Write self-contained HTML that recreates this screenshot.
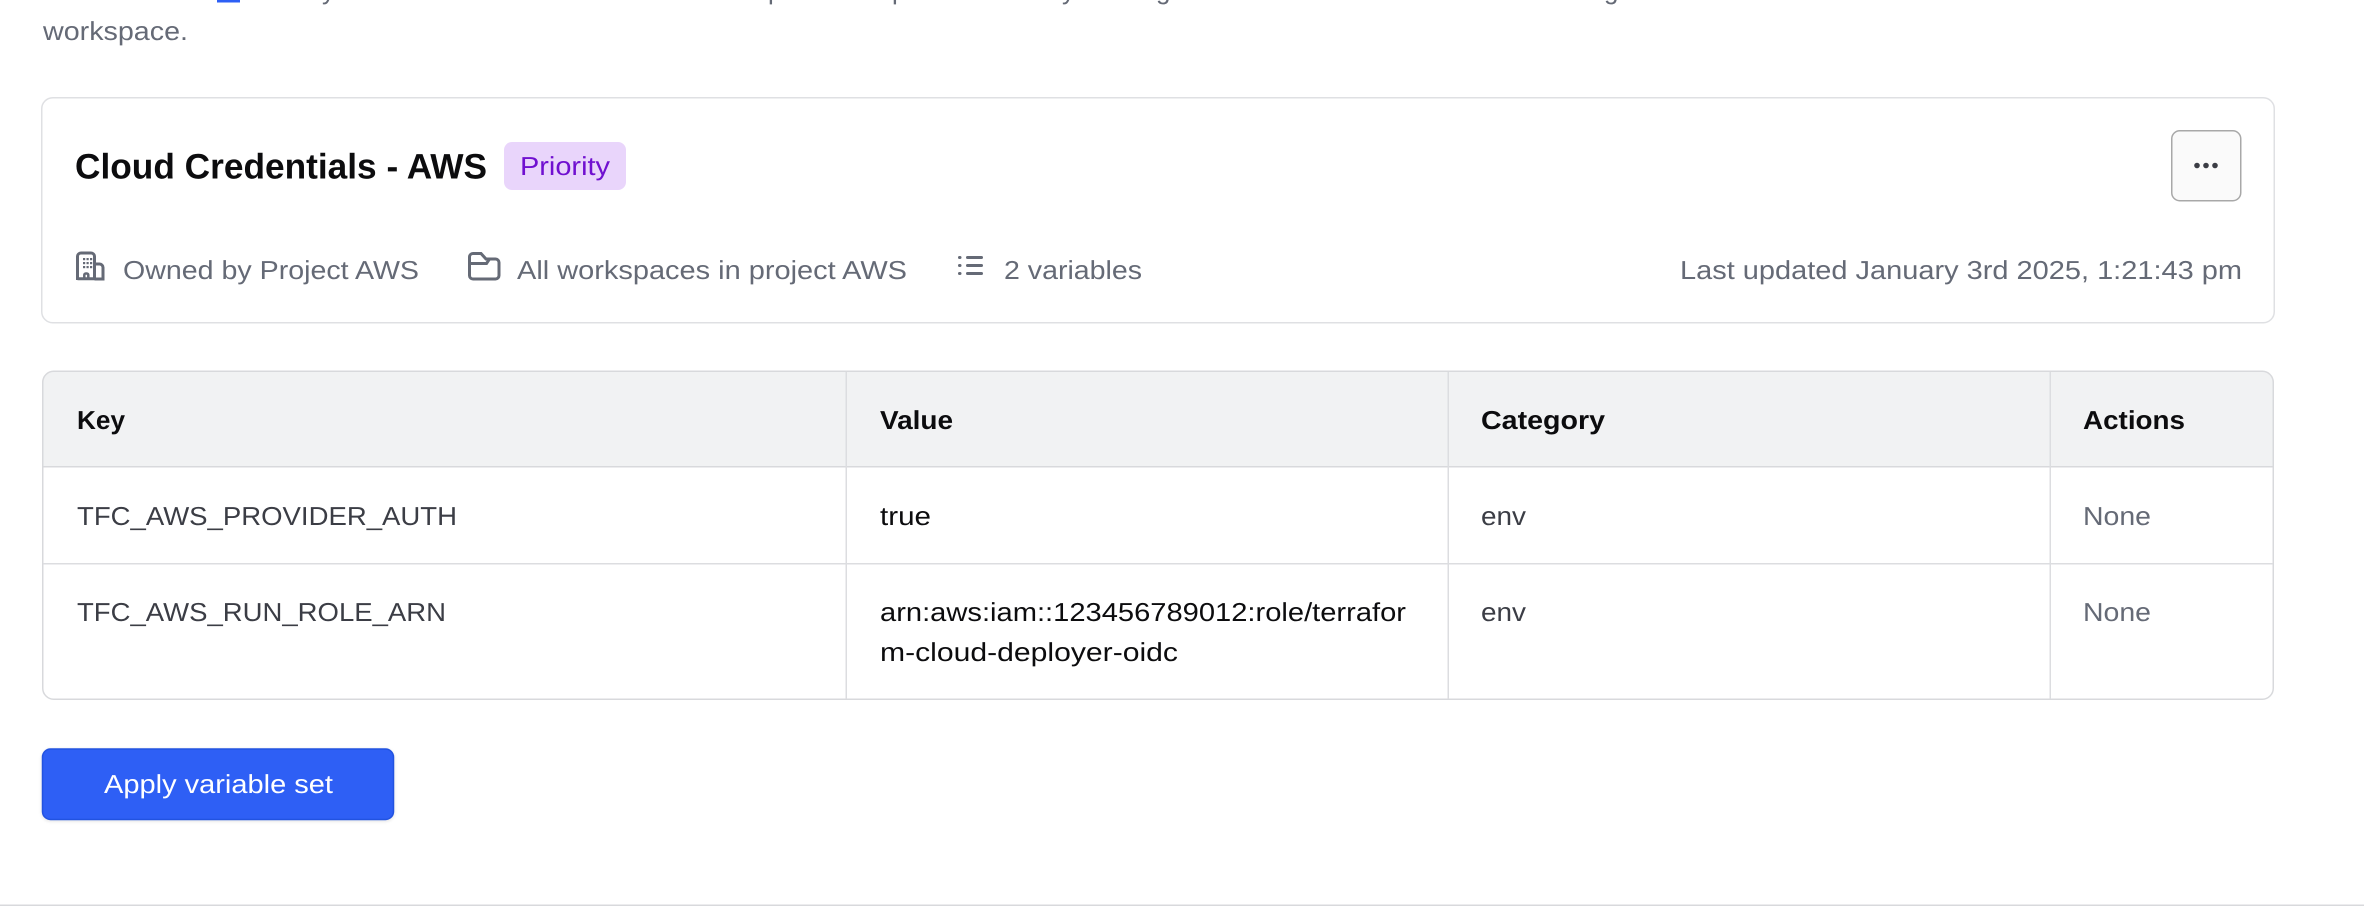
<!DOCTYPE html>
<html lang="en">
<head>
<meta charset="utf-8">
<title>Cloud Credentials - AWS</title>
<style>
html,body{margin:0;padding:0;background:#fff;width:2364px;height:916px;overflow:hidden}
svg{display:block}
text{font-family:"Liberation Sans",Arial,sans-serif;font-size:26px;fill:#656a76;text-rendering:geometricPrecision}
.d{fill:#3b3d45}
.k{fill:#0c0c0e;font-weight:700}
</style>
</head>
<body>
<svg width="2364" height="916" viewBox="0 0 2364 916" xmlns="http://www.w3.org/2000/svg">
<defs>
<clipPath id="tc"><rect x="43" y="372" width="2230" height="327" rx="11"/></clipPath>
<filter id="bs" x="-5%" y="-10%" width="110%" height="125%"><feDropShadow dx="0" dy="1" stdDeviation="1.5" flood-color="#0c0c0e" flood-opacity=".12"/></filter>
</defs>

<!-- cropped line above -->
<rect x="217" y="0" width="23" height="2.500" fill="#2d5ff5"/>
<text x="322" y="-1">y</text><text x="768" y="-1">p</text><text x="892" y="-1">p</text><text x="1062" y="-1">y</text><text x="1156" y="-1">g</text><text x="1604" y="-1">g</text>

<text x="43" y="40" textLength="145" lengthAdjust="spacingAndGlyphs">workspace.</text>

<!-- Card -->
<rect x="41.750" y="97.750" width="2232.500" height="225" rx="11" fill="#fff" stroke="#dfe0e3" stroke-width="1.500"/>
<text x="75" y="178.500" style="font-size:35.500px;font-weight:700;fill:#0c0c0e" textLength="412" lengthAdjust="spacingAndGlyphs">Cloud Credentials - AWS</text>
<rect x="504" y="142" width="122" height="48" rx="8" fill="#e9d5fb"/>
<text x="520" y="175" style="fill:#7010d0" textLength="90" lengthAdjust="spacingAndGlyphs">Priority</text>

<rect x="2171.750" y="130.750" width="69" height="70" rx="8" fill="#fafafa" stroke="#a8a8a8" stroke-width="1.500"/>
<circle cx="2197" cy="165.500" r="2.800" fill="#3b3d45"/><circle cx="2206" cy="165.500" r="2.800" fill="#3b3d45"/><circle cx="2215" cy="165.500" r="2.800" fill="#3b3d45"/>

<!-- building icon -->
<g fill="none" stroke="#656a76" stroke-width="3">
<path d="M77.500 280V256.500a3.500 3.500 0 0 1 3.500-3.500h10a3.500 3.500 0 0 1 3.500 3.500V280"/>
<path d="M94.500 264h5a3.500 3.500 0 0 1 3.500 3.500V279H94.500"/>
<path d="M77.500 278.800H94.500"/>
<path d="M84.300 280v-5a1.500 1.500 0 0 1 1.500-1.500h1a1.500 1.500 0 0 1 1.500 1.500v5" stroke-width="2.500"/>
</g>
<g fill="#656a76">
<rect x="83" y="258" width="2.200" height="2.200"/><rect x="86.500" y="258" width="2.200" height="2.200"/><rect x="90" y="258" width="2.200" height="2.200"/>
<rect x="83" y="262" width="2.200" height="2.200"/><rect x="86.500" y="262" width="2.200" height="2.200"/><rect x="90" y="262" width="2.200" height="2.200"/>
<rect x="83" y="266" width="2.200" height="2.200"/><rect x="86.500" y="266" width="2.200" height="2.200"/><rect x="90" y="266" width="2.200" height="2.200"/>
</g>
<text x="123" y="279" textLength="296" lengthAdjust="spacingAndGlyphs">Owned by Project AWS</text>

<!-- folder icon -->
<path d="M469.500 257a3.500 3.500 0 0 1 3.500-3.500h8l5 5.500h9.500a3.500 3.500 0 0 1 3.500 3.500v13a3.500 3.500 0 0 1-3.500 3.500h-22.500a3.500 3.500 0 0 1-3.500-3.500zM469.500 263.500h17l3-4.500" fill="none" stroke="#656a76" stroke-width="3"/>
<text x="517" y="279" textLength="390" lengthAdjust="spacingAndGlyphs">All workspaces in project AWS</text>

<!-- list icon -->
<g fill="#656a76">
<rect x="958" y="256" width="3.500" height="3" rx="1.500"/><rect x="958" y="264" width="3.500" height="3" rx="1.500"/><rect x="958" y="272" width="3.500" height="3" rx="1.500"/>
<rect x="966" y="256" width="17" height="3" rx="1.500"/><rect x="966" y="264" width="17" height="3" rx="1.500"/><rect x="966" y="272" width="17" height="3" rx="1.500"/>
</g>
<text x="1004" y="279" textLength="138" lengthAdjust="spacingAndGlyphs">2 variables</text>
<text x="1680" y="279" textLength="562" lengthAdjust="spacingAndGlyphs">Last updated January 3rd 2025, 1:21:43 pm</text>

<!-- Table -->
<g clip-path="url(#tc)">
<rect x="43" y="372" width="2230" height="94" fill="#f1f2f3"/>
</g>
<rect x="42.750" y="371.250" width="2230.500" height="328" rx="11" fill="none" stroke="#d8d9dc" stroke-width="1.500"/>
<rect x="43" y="466" width="2230" height="1.500" fill="#d8d9dc"/>
<rect x="43" y="563" width="2230" height="1.500" fill="#dcdde0"/>
<rect x="845.500" y="372" width="1.500" height="327" fill="#dcdde0"/>
<rect x="1447.500" y="372" width="1.500" height="327" fill="#dcdde0"/>
<rect x="2049.500" y="372" width="1.500" height="327" fill="#dcdde0"/>

<text class="k" x="77" y="429" textLength="48" lengthAdjust="spacingAndGlyphs">Key</text>
<text class="k" x="880" y="429" textLength="73" lengthAdjust="spacingAndGlyphs">Value</text>
<text class="k" x="1481" y="429" textLength="124" lengthAdjust="spacingAndGlyphs">Category</text>
<text class="k" x="2083" y="429" textLength="102" lengthAdjust="spacingAndGlyphs">Actions</text>

<text class="d" x="77" y="525" textLength="380" lengthAdjust="spacingAndGlyphs">TFC_AWS_PROVIDER_AUTH</text>
<text style="fill:#0c0c0e" x="880" y="525" textLength="51" lengthAdjust="spacingAndGlyphs">true</text>
<text class="d" x="1481" y="525" textLength="45" lengthAdjust="spacingAndGlyphs">env</text>
<text x="2083" y="525" textLength="68" lengthAdjust="spacingAndGlyphs">None</text>

<text class="d" x="77" y="621" textLength="369" lengthAdjust="spacingAndGlyphs">TFC_AWS_RUN_ROLE_ARN</text>
<text style="fill:#0c0c0e" x="880" y="621" textLength="526" lengthAdjust="spacingAndGlyphs">arn:aws:iam::123456789012:role/terrafor</text>
<text style="fill:#0c0c0e" x="880" y="661" textLength="298" lengthAdjust="spacingAndGlyphs">m-cloud-deployer-oidc</text>
<text class="d" x="1481" y="621" textLength="45" lengthAdjust="spacingAndGlyphs">env</text>
<text x="2083" y="621" textLength="68" lengthAdjust="spacingAndGlyphs">None</text>

<!-- Button -->
<rect x="42.500" y="749" width="351" height="70.500" rx="8" fill="#2d5ff5" stroke="#2452e0" stroke-width="1.500" filter="url(#bs)"/>
<text x="104" y="793" style="fill:#fff" textLength="229" lengthAdjust="spacingAndGlyphs">Apply variable set</text>

<!-- Footer rule -->
<rect x="0" y="904.500" width="2364" height="1.500" fill="#d8d9dc"/>
</svg>
</body>
</html>
